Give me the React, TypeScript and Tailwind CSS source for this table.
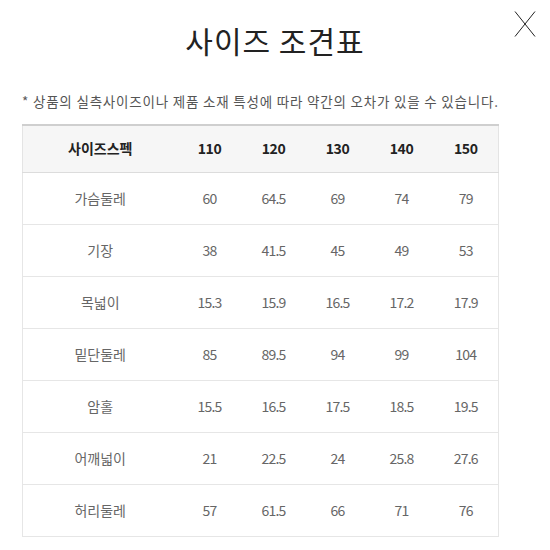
const rows: [string, string[]][] = [
  ["가슴둘레", ["60", "64.5", "69", "74", "79"]],
  ["기장", ["38", "41.5", "45", "49", "53"]],
  ["목넓이", ["15.3", "15.9", "16.5", "17.2", "17.9"]],
  ["밑단둘레", ["85", "89.5", "94", "99", "104"]],
  ["암홀", ["15.5", "16.5", "17.5", "18.5", "19.5"]],
  ["어깨넓이", ["21", "22.5", "24", "25.8", "27.6"]],
  ["허리둘레", ["57", "61.5", "66", "71", "76"]],
]

const sizes = ["110", "120", "130", "140", "150"]

const App = () => {
  return (
    <div className="relative w-[550px] h-[550px] bg-white font-['Noto_Sans_CJK_KR',sans-serif] overflow-hidden">
      <button className="absolute left-[514px] top-[11px] w-[22px] h-[26px]">
        <svg width="22" height="26" viewBox="0 0 22 26">
          <path d="M1 0.5 L21 25.5 M21 0.5 L1 25.5" stroke="#222" strokeWidth="1" fill="none" />
        </svg>
      </button>

      <h1 className="pt-[20px] text-center text-[30px] leading-[40px] text-[#222] tracking-[1px]">사이즈 조견표</h1>

      <p className="mt-[33px] pl-[22px] text-[13.5px] leading-[17px] text-[#555] tracking-[0.8px] whitespace-nowrap">
        * 상품의 실측사이즈이나 제품 소재 특성에 따라 약간의 오차가 있을 수 있습니다.
      </p>

      <table className="mt-[14px] ml-[22px] w-[476px] table-fixed border-collapse text-[14px]">
        <colgroup>
          <col className="w-[155px]" />
          <col className="w-[64px]" />
          <col className="w-[64px]" />
          <col className="w-[64px]" />
          <col className="w-[64px]" />
          <col className="w-[65px]" />
        </colgroup>
        <thead>
          <tr className="h-[47px] bg-[#f6f6f6] border-t-2 border-t-[#cfcfcf] border-b border-b-[#dcdcdc] border-x border-x-[#e4e4e4]">
            <th className="font-bold text-[#222] text-center">사이즈스펙</th>
            {sizes.map((s) => (
              <th key={s} className="font-bold text-[#222] text-center tracking-[-0.5px]">{s}</th>
            ))}
          </tr>
        </thead>
        <tbody>
          {rows.map(([label, vals]) => (
            <tr key={label} className="h-[52px] border border-[#e6e6e6]">
              <td className="text-center text-[#666]">{label}</td>
              {vals.map((v, i) => (
                <td key={i} className="text-center text-[#666] tracking-[-0.8px]">{v}</td>
              ))}
            </tr>
          ))}
        </tbody>
      </table>
    </div>
  )
}

export default App
